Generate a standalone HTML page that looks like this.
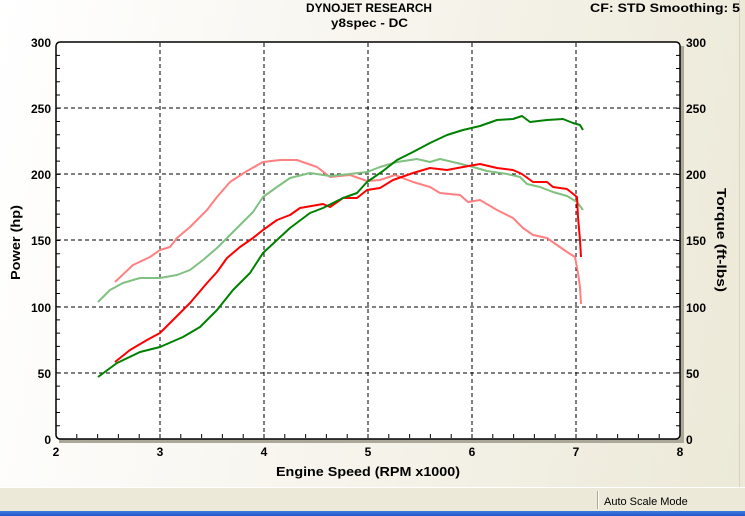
<!DOCTYPE html>
<html><head><meta charset="utf-8"><style>
html,body{margin:0;padding:0}
body{width:745px;height:516px;overflow:hidden;position:relative;font-family:"Liberation Sans",sans-serif;background:#ece9d8}
#main{position:absolute;left:0;top:0;width:739px;height:487px;background:linear-gradient(100deg,#ffffff 0%,#f7f5ee 45%,#ece9d8 100%)}
#rp{position:absolute;left:739px;top:0;width:6px;height:487px;background:#ece9d8;border-left:1px solid #d8d4c4}
#status{position:absolute;left:0;top:487px;width:745px;height:24px;background:#ece9d8;border-top:1px solid #fff}
#sep{position:absolute;left:597px;top:491px;width:1px;height:18px;background:#aca899}
#sep2{position:absolute;left:598px;top:491px;width:1px;height:18px;background:#fff}
#stxt{position:absolute;left:604px;top:496px;font-size:11px;color:#000}
#task{position:absolute;left:0;top:511px;width:745px;height:5px;background:linear-gradient(#3d7be0,#2456c8)}
svg{position:absolute;left:0;top:0}
</style></head><body>
<div id="main"></div><div id="rp"></div>
<div id="status"></div><div id="sep"></div><div id="sep2"></div><div id="stxt">Auto Scale Mode</div>
<div id="task"></div>
<svg width="745" height="487" font-family="Liberation Sans, sans-serif" font-weight="bold" font-size="12">
<text x="306" y="12" textLength="126" lengthAdjust="spacingAndGlyphs">DYNOJET RESEARCH</text>
<text x="331" y="27" textLength="77" lengthAdjust="spacingAndGlyphs">y8spec - DC</text>
<text x="590" y="12" textLength="150" lengthAdjust="spacingAndGlyphs">CF: STD  Smoothing: 5</text>
<rect x="59" y="439" width="625" height="4" fill="#aca899"/>
<rect x="680" y="46" width="4" height="396" fill="#aca899"/>
<rect x="56" y="42" width="624" height="397" rx="4" fill="#fff" stroke="#000" stroke-width="1.5"/>
<g stroke="#000" stroke-width="1" stroke-dasharray="4,3">
<path d="M160 43V438M264 43V438M368 43V438M472 43V438M576 43V438"/>
<path d="M57 108H679M57 174H679M57 240H679M57 307H679M57 373H679"/>
</g>
<g stroke="#000" stroke-width="1" id="tk"></g>
<g stroke-width="2" fill="none" stroke-linejoin="round">
<polyline stroke="#ff8080" points="115,282 133,265 150,257 160,250 170,247 177,238 190,227 207,210 217,197 230,182 247,171 263,162 280,160 297,160 317,167 330,177 350,175 367,181 380,180 395,175 413,182 430,187 440,193 460,195 468,202 480,200 497,210 513,218 523,228 533,235 547,238 557,245 567,252 575,257 578,273 580,287 581,304"/>
<polyline stroke="#80c080" points="98,302 110,290 123,283 140,278 160,278 177,275 190,270 203,260 217,248 230,235 243,222 253,212 263,197 277,187 290,178 310,173 330,176 350,174 367,172 380,167 397,162 417,159 430,162 440,159 457,163 473,167 487,171 507,174 520,177 527,184 540,187 553,192 567,196 577,202 583,210"/>
<polyline stroke="#ff0000" points="115,362 130,350 147,340 160,333 173,320 190,303 207,283 217,272 227,258 240,247 253,238 263,230 277,220 290,215 300,208 323,204 330,207 343,198 357,198 367,190 380,188 393,180 413,173 430,168 447,170 463,167 480,164 497,168 513,170 522,174 533,182 547,182 553,187 567,189 577,197 578,217 580,240 581,257"/>
<polyline stroke="#008000" points="98,377 117,363 140,352 160,347 183,337 200,327 217,310 233,290 250,273 263,253 277,240 290,228 310,213 323,208 343,198 357,193 367,182 383,171 397,160 413,152 430,143 447,135 463,130 480,126 497,120 513,119 522,116 530,122 547,120 563,119 573,123 580,125 583,130"/>
</g>
<g text-anchor="end">
<text x="51" y="47">300</text><text x="51" y="113">250</text><text x="51" y="179">200</text><text x="51" y="245">150</text><text x="51" y="312">100</text><text x="51" y="378">50</text><text x="51" y="444">0</text>
</g>
<g>
<text x="686" y="47">300</text><text x="686" y="113">250</text><text x="686" y="179">200</text><text x="686" y="245">150</text><text x="686" y="312">100</text><text x="686" y="378">50</text><text x="686" y="444">0</text>
</g>
<g text-anchor="middle">
<text x="56" y="456">2</text><text x="160" y="456">3</text><text x="264" y="456">4</text><text x="368" y="456">5</text><text x="472" y="456">6</text><text x="576" y="456">7</text><text x="680" y="456">8</text>
</g>
<text x="276" y="476" font-size="13" textLength="184" lengthAdjust="spacingAndGlyphs">Engine Speed (RPM x1000)</text>
<text transform="translate(20,280) rotate(-90)" font-size="13" textLength="75" lengthAdjust="spacingAndGlyphs">Power (hp)</text>
<text transform="translate(717,188) rotate(90)" font-size="13" textLength="104" lengthAdjust="spacingAndGlyphs">Torque (ft-lbs)</text>
</svg>
<script>
var g=document.getElementById('tk'),d='';
for(var i=1;i<30;i++){var x=56+i*20.8;d+='M'+x+' 438V434';}
for(var j=1;j<30;j++){var y=439-j*13.23;d+='M56 '+y+'H60M680 '+y+'H676';}
var p=document.createElementNS('http://www.w3.org/2000/svg','path');p.setAttribute('d',d);g.appendChild(p);
</script>
</body></html>
